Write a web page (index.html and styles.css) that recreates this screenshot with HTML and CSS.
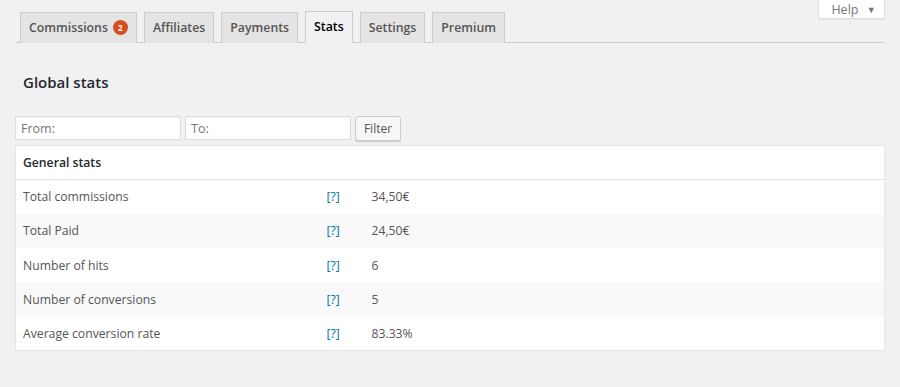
FILE: index.html
```html
<!DOCTYPE html>
<html lang="en">
<head>
    <meta charset="UTF-8">
    <title>Affiliates - Stats</title>
    <link rel="stylesheet" href="styles.css">
</head>
<body>
    <div class="wrap">
        <button class="help-toggle">Help <span class="help-arrow">&#9660;</span></button>

        <nav class="nav-tab-wrapper">
            <a class="nav-tab" href="#">Commissions <span class="count-badge">2</span></a>
            <a class="nav-tab" href="#">Affiliates</a>
            <a class="nav-tab" href="#">Payments</a>
            <a class="nav-tab nav-tab-active" href="#">Stats</a>
            <a class="nav-tab" href="#">Settings</a>
            <a class="nav-tab" href="#">Premium</a>
        </nav>

        <h3 class="section-title">Global stats</h3>

        <form class="stats-filter">
            <input type="text" class="date-input" placeholder="From:">
            <input type="text" class="date-input" placeholder="To:">
            <button type="button" class="button">Filter</button>
        </form>

        <table class="stats-table">
            <thead>
                <tr>
                    <th colspan="3">General stats</th>
                </tr>
            </thead>
            <tbody>
                <tr>
                    <td class="col-label">Total commissions</td>
                    <td class="col-tip"><a href="#">[?]</a></td>
                    <td>34,50€</td>
                </tr>
                <tr class="alternate">
                    <td class="col-label">Total Paid</td>
                    <td class="col-tip"><a href="#">[?]</a></td>
                    <td>24,50€</td>
                </tr>
                <tr>
                    <td class="col-label">Number of hits</td>
                    <td class="col-tip"><a href="#">[?]</a></td>
                    <td>6</td>
                </tr>
                <tr class="alternate">
                    <td class="col-label">Number of conversions</td>
                    <td class="col-tip"><a href="#">[?]</a></td>
                    <td>5</td>
                </tr>
                <tr>
                    <td class="col-label">Average conversion rate</td>
                    <td class="col-tip"><a href="#">[?]</a></td>
                    <td>83.33%</td>
                </tr>
            </tbody>
        </table>
    </div>
</body>
</html>
```

FILE: styles.css
```css
* {
    margin: 0;
    padding: 0;
    box-sizing: border-box;
}

body {
    font-family: "Open Sans", "Liberation Sans", sans-serif;
    font-size: 12.2px;
    color: #444;
    background: #f1f1f1;
}

.wrap {
    position: relative;
    padding: 0 15px;
}

/* screen meta toggle sits over the tab row */
.help-toggle {
    position: absolute;
    top: 0;
    right: 15px;
    width: 67px;
    height: 19px;
    padding-left: 4px;
    background: #fff;
    border: 1px solid #ddd;
    border-top: none;
    box-shadow: 0 1px 1px rgba(0, 0, 0, 0.04);
    font-family: inherit;
    font-size: 12.5px;
    color: #72777c;
    line-height: 17px;
    cursor: pointer;
}

.help-arrow {
    font-size: 9px;
    margin-left: 5px;
    vertical-align: 1px;
}

.nav-tab-wrapper {
    display: flex;
    align-items: flex-end;
    padding: 11px 0 0 5px;
    border-bottom: 1px solid #ccc;
}

.nav-tab {
    display: flex;
    align-items: center;
    height: 31px;
    margin-right: 7px;
    margin-bottom: -1px;
    padding: 0 8px 1px;
    background: #e4e4e4;
    border: 1px solid #ccc;
    border-bottom: none;
    font-size: 12.3px;
    font-weight: 600;
    color: #555;
    text-decoration: none;
}

.nav-tab-active {
    background: #f1f1f1;
    border-bottom: 1px solid #f1f1f1;
    height: 32px;
    color: #000;
}

.count-badge {
    display: inline-block;
    width: 15px;
    height: 15px;
    margin-left: 5px;
    border-radius: 50%;
    background: #d54e21;
    color: #fff;
    font-size: 8px;
    font-weight: 700;
    line-height: 15px;
    text-align: center;
}

.section-title {
    margin: 29px 0 0 8px;
    font-size: 15px;
    font-weight: 600;
    line-height: 20px;
    color: #23282d;
}

.stats-filter {
    display: flex;
    gap: 4px;
    margin-top: 24px;
}

.date-input {
    width: 166px;
    height: 24px;
    padding: 0 5px;
    background: #fff;
    border: 1px solid #ddd;
    box-shadow: inset 0 1px 2px rgba(0, 0, 0, 0.07);
    font-family: inherit;
    font-size: 12.5px;
    color: #32373c;
}

.date-input::placeholder {
    color: #72777c;
}

.button {
    width: 46px;
    height: 25px;
    background: #f7f7f7;
    border: 1px solid #ccc;
    border-radius: 3px;
    box-shadow: 0 1px 0 #ccc;
    font-family: inherit;
    font-size: 12px;
    color: #555;
    cursor: pointer;
}

.stats-table {
    width: 100%;
    margin-top: 4px;
    border-collapse: collapse;
    background: #fff;
    border: 1px solid #e5e5e5;
    box-shadow: 0 1px 1px rgba(0, 0, 0, 0.04);
}

.stats-table th {
    height: 34px;
    padding: 0 7px;
    text-align: left;
    font-size: 12.2px;
    font-weight: 600;
    color: #23282d;
    border-bottom: 1px solid #e1e1e1;
}

.stats-table td {
    height: 34.25px;
    padding: 0 8px;
    color: #555;
}

.stats-table .alternate td {
    background: #f9f9f9;
}

.stats-table .col-label {
    width: 303px;
    padding-left: 7px;
}

.col-tip {
    width: 45px;
}

.col-tip a {
    color: #0073aa;
    text-decoration: none;
}
```
